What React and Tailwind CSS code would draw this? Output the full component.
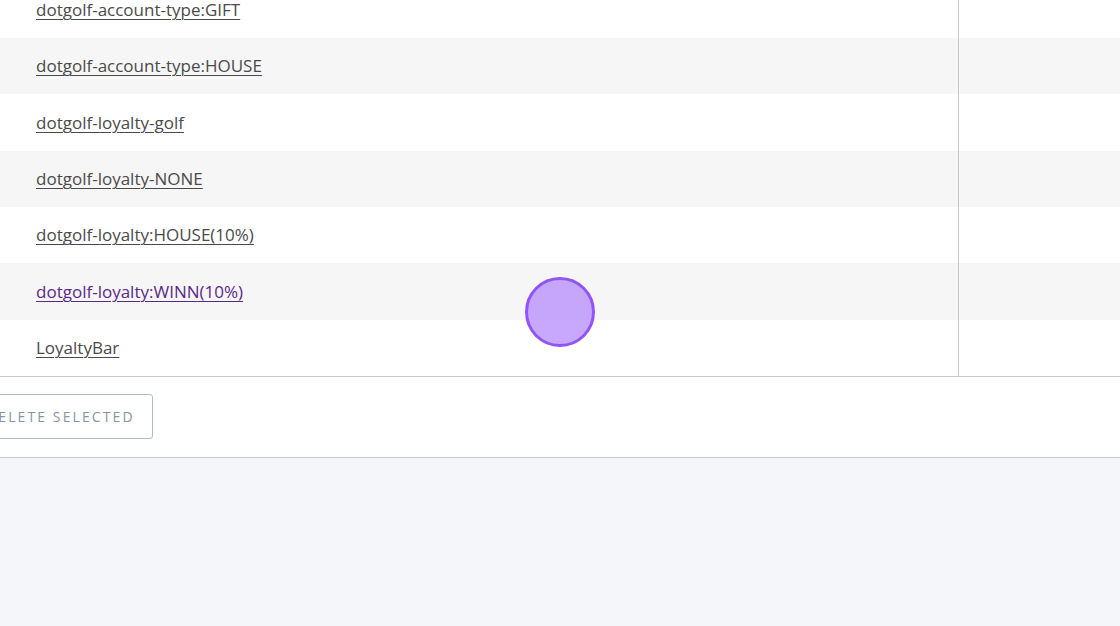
import React from 'react';

const tags = [
  { name: 'dotgolf-account-type:GIFT' },
  { name: 'dotgolf-account-type:HOUSE' },
  { name: 'dotgolf-loyalty-golf' },
  { name: 'dotgolf-loyalty-NONE' },
  { name: 'dotgolf-loyalty:HOUSE(10%)' },
  { name: 'dotgolf-loyalty:WINN(10%)', visited: true },
  { name: 'LoyaltyBar' },
];

const App = () => {
  return (
    <div
      className="relative w-[1120px] h-[626px] overflow-hidden bg-[#f5f6fa]"
      style={{ fontFamily: '"Open Sans", sans-serif' }}
    >
      <div className="bg-white -mt-[18.33px]">
        {/* --- Tags table --- */}
        <div className="border-b border-[#c9c9c9]">
          {tags.map((tag, i) => (
            <div
              key={tag.name}
              className={`flex h-[56.33px] ${i % 2 === 1 ? 'bg-[#f6f6f6]' : 'bg-white'}`}
            >
              <div className="w-[959px] flex items-center pl-[36px] border-r border-[#c9c9c9]">
                <a
                  href="#"
                  className={`text-[17px] underline underline-offset-[3px] decoration-1 ${
                    tag.visited ? 'text-[#5a2a8a]' : 'text-[#4a4a4a]'
                  }`}
                >
                  {tag.name}
                </a>
              </div>
              <div className="flex-1"></div>
            </div>
          ))}
        </div>

        {/* --- Actions --- */}
        <div className="h-[81px] flex items-center border-b border-[#c9c9c9]">
          <button className="-ml-[33px] -mt-[1px] h-[45px] pl-[18px] pr-[17px] border border-[#b3bcc4] rounded-[3px] bg-white text-[14px] tracking-[2.1px] text-[#8795a1]">
            DELETE SELECTED
          </button>
        </div>
      </div>

      {/* click indicator */}
      <div className="absolute left-[525px] top-[277px] w-[70px] h-[70px] rounded-full border-[3px] border-[#8f55f7] bg-[#b48bfb]/75"></div>
    </div>
  );
};

export default App;
